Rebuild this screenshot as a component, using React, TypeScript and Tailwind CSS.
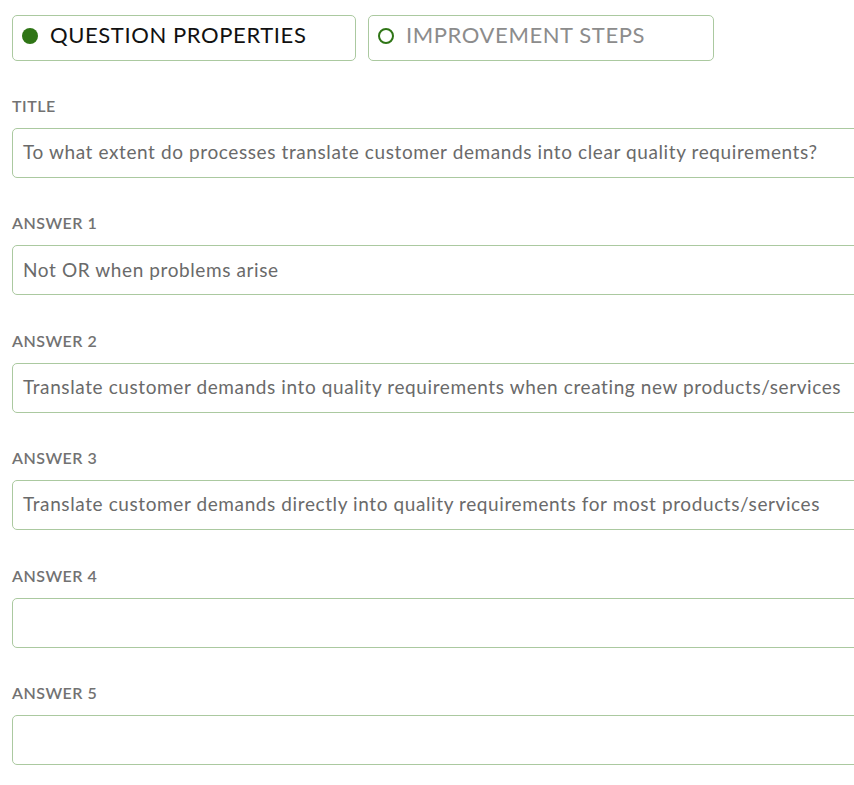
import React from "react";

const fields = [
  { label: "TITLE", value: "To what extent do processes translate customer demands into clear quality requirements?" },
  { label: "ANSWER 1", value: "Not OR when problems arise" },
  { label: "ANSWER 2", value: "Translate customer demands into quality requirements when creating new products/services" },
  { label: "ANSWER 3", value: "Translate customer demands directly into quality requirements for most products/services" },
  { label: "ANSWER 4", value: "" },
  { label: "ANSWER 5", value: "" },
];

export default function App() {
  return (
    <div className="w-[854px] h-[785px] overflow-hidden bg-white" style={{ fontFamily: "Lato, 'Noto Sans', sans-serif" }}>
      <div className="w-[900px] pl-[12px] pt-[15px]">
        <div className="flex gap-[12px]">
          <div className="w-[344px] h-[46px] rounded-[5px] border border-[#abc9a0] flex items-center pl-[9px] pb-[4px]">
            <span className="w-[16px] h-[16px] rounded-full bg-[#2f7516] shrink-0" />
            <span className="ml-[12px] mb-[4px] text-[22px] text-[#111] tracking-[0.6px]">QUESTION PROPERTIES</span>
          </div>
          <div className="w-[346px] h-[46px] rounded-[5px] border border-[#abc9a0] flex items-center pl-[9px] pb-[4px]">
            <span className="w-[16px] h-[16px] rounded-full border-2 border-[#2f7516] shrink-0" />
            <span className="ml-[12px] mb-[4px] text-[22px] text-[#8c8c8c] tracking-[0.6px]">IMPROVEMENT STEPS</span>
          </div>
        </div>
        <div className="mt-[37px] flex flex-col gap-[37.4px]">
          {fields.map((f) => (
            <div key={f.label} className="flex flex-col">
              <div className="text-[16px] font-semibold text-[#727272] h-[16px] leading-[16px] tracking-[0.5px]">{f.label}</div>
              <div className="mt-[14px] h-[50px] rounded-[5px] border border-[#abc9a0] flex items-center pl-[10px] pb-[1px] text-[19px] text-[#6a6a6a] tracking-[0.6px]">
                {f.value}
              </div>
            </div>
          ))}
        </div>
      </div>
    </div>
  );
}
